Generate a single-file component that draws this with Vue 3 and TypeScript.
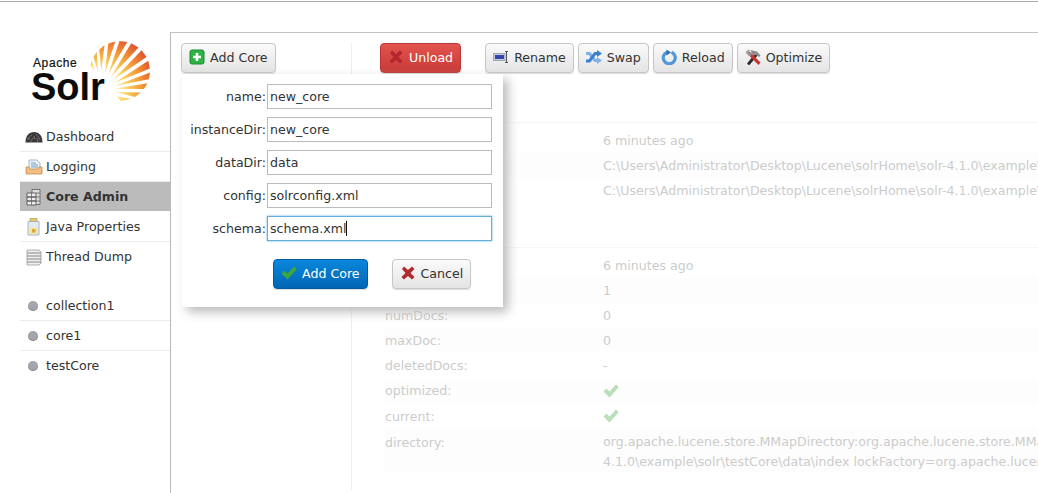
<script setup lang="ts">
const F = { x: 101, y: 90 }
const C = { x: 120, y: 71 }
const R = 30

function onArc(deg: number): string {
  const a = (deg * Math.PI) / 180
  return `${(C.x + R * Math.cos(a)).toFixed(1)},${(C.y + R * Math.sin(a)).toFixed(1)}`
}

const rayAngles: [number, number, number][] = [
  [-168, -160, 20], [-152, -141, 19], [-134, -121, 19], [-113, -99, 17],
  [-91, -76, 17], [-68, -52, 16], [-44, -28, 16], [-20, -5, 15],
  [3, 16, 14], [24, 37, 14], [46, 60, 15], [69, 88, 17],
]

const rays = rayAngles.map(([a, b, inner]) => {
  const [ax, ay] = onArc(a).split(',').map(Number)
  const [bx, by] = onArc(b).split(',').map(Number)
  const mx = (ax + bx) / 2 - F.x
  const my = (ay + by) / 2 - F.y
  const l = Math.hypot(mx, my)
  const sx = F.x + (mx / l) * inner
  const sy = F.y + (my / l) * inner
  return `${sx.toFixed(1)},${sy.toFixed(1)} ${onArc(a)} ${onArc(b)}`
})

const icons: Record<string, string> = {
  dashboard:
    '<path d="M0.500 14.500C0.500 7.500 4 4 9 4s8.500 3.500 8.500 10.500z" fill="#3a3a3d"/><path d="M3 12c1-3 2-4 4-5M6 14c0-3 2-4 4-4M11 6c1 2 3 3 4 6M2 10l3 1M9 8l1 3M12 10l1 4" stroke="#7d6f70" stroke-width=".9" fill="none"/>',
  logging:
    '<path d="M4 2h8l3 3v7H4z" fill="#eef3f8" stroke="#8fa3b8" stroke-width=".8"/><path d="M6 5h5M6 7h7M6 9h7" stroke="#6d9ec9"/><path d="M1 9h3l1 2h8l1-2h3v7H1z" fill="#f3bd83" stroke="#c68a4c" stroke-width=".8"/>',
  core:
    '<path d="M7 1.500h8v15H7z" fill="#ddd" stroke="#666" stroke-width=".9"/><path d="M2 5h9v4H2zM2 9h9v4H2zM2 13h9v4H2z" fill="#eee" stroke="#555" stroke-width=".9"/><path d="M6.500 5v12M11 5h4M11 9h4M11 13h4" stroke="#666" stroke-width=".8"/>',
  java:
    '<path d="M5 .500h7v3H5z" fill="#e7c66d" stroke="#b79b4e" stroke-width=".7"/><path d="M3 3.500h11V17H3z" fill="#e2ebf0" stroke="#9fb0ba" stroke-width=".9"/><path d="M4.500 9.500h8V16h-8z" fill="#f5e3a5"/><rect x="7" y="11" width="3.500" height="3.500" fill="#d9a63c"/>',
  thread:
    '<path d="M2 2h12l2 2v11l-2 2H2z" fill="#eee" stroke="#999" stroke-width=".8"/><path d="M2 5h14M2 8h14M2 11h14M2 14h14" stroke="#888" stroke-width="1"/>',
  add:
    '<rect x="1" y="1" width="14" height="14" rx="2" fill="#2fb344" stroke="#1c8a30"/><path d="M8 4v8M4 8h8" stroke="#fff" stroke-width="2.600"/>',
  x:
    '<path d="M2 4 4 1.500 8 5 12 1.500 14.500 4 10.500 8 14.500 12 12 14.500 8 11 4 14.500 1.500 12 5.500 8z" fill="#b5272c"/>',
  xdim:
    '<path d="M2 4 4 1.500 8 5 12 1.500 14.500 4 10.500 8 14.500 12 12 14.500 8 11 4 14.500 1.500 12 5.500 8z" fill="#b02a30"/>',
  rename:
    '<rect x=".500" y="4.500" width="11.500" height="7" fill="#c9cfe0" stroke="#9aa"/><rect x="2" y="6" width="9" height="4" fill="#3345b0"/><path d="M12 2.500h3M13.500 2.500v11M12 13.500h3" stroke="#444" stroke-width=".9" fill="none"/>',
  swap:
    '<path d="M0 4.500h3.500l5.500 7h2.500" fill="none" stroke="#7fb2ea" stroke-width="3"/><path d="M11 8l5 3.500-5 3.500z" fill="#7fb2ea"/><path d="M0 12h3.500l5.500-7.500h2.500" fill="none" stroke="#3c80d4" stroke-width="3"/><path d="M11 1l5 3.500-5 3.500z" fill="#3c80d4"/>',
  reload:
    '<path d="M6 3.200a6 6 0 1 0 4.500 0" fill="none" stroke="#4f97d9" stroke-width="3.200"/><path d="M5.500 .500v6L10 3.500z" fill="#2b6fb5"/>',
  optimize:
    '<path d="M2 14.500 11 3.500l2.500 2L4 16.500z" fill="#2b2b2b"/><path d="M5.500 1 12 2.500l3.500 4-1.500 1.500-3-2-3 .500z" fill="#8d8d8d"/><path d="M4.500 2.500l11 11-2 2.500-11-11z" fill="#c8332e"/><path d="M1 4a3 3 0 0 1 4-3L3.500 3 5 4.500 7 3a3 3 0 0 1-3 4z" fill="#9a9a9a"/>',
  check:
    '<path d="M.500 8.500 3.500 5.500l3 3L13 1.500l2.800 2.800L6.500 14.500z" fill="#3ea63e"/>',
}

const nav = [
  { label: 'Dashboard', icon: 'dashboard' },
  { label: 'Logging', icon: 'logging' },
  { label: 'Core Admin', icon: 'core', active: true },
  { label: 'Java Properties', icon: 'java' },
  { label: 'Thread Dump', icon: 'thread' },
]
const cores = ['collection1', 'core1', 'testCore']

const actions = [
  { label: 'Rename', icon: 'rename' },
  { label: 'Swap', icon: 'swap' },
  { label: 'Reload', icon: 'reload' },
  { label: 'Optimize', icon: 'optimize' },
]

const fields = [
  { label: 'name', value: 'new_core' },
  { label: 'instanceDir', value: 'new_core' },
  { label: 'dataDir', value: 'data' },
  { label: 'config', value: 'solrconfig.xml' },
  { label: 'schema', value: 'schema.xml', focus: true },
]

const instance = [
  { k: 'lastModified:', v: '6 minutes ago' },
  { k: 'instanceDir:', v: 'C:\\Users\\Administrator\\Desktop\\Lucene\\solrHome\\solr-4.1.0\\example\\solr\\testCore\\' },
  { k: 'dataDir:', v: 'C:\\Users\\Administrator\\Desktop\\Lucene\\solrHome\\solr-4.1.0\\example\\solr\\testCore\\data\\' },
]
const index = [
  { k: 'lastModified:', v: '6 minutes ago' },
  { k: 'version:', v: '1' },
  { k: 'numDocs:', v: '0' },
  { k: 'maxDoc:', v: '0' },
  { k: 'deletedDocs:', v: '-' },
]
</script>

<template>
  <div class="page">
    <aside class="side">
      <svg class="logo" viewBox="20 30 140 80" width="140" height="80" role="img" aria-label="Apache Solr">
        <defs>
          <radialGradient id="sun" gradientUnits="userSpaceOnUse" cx="101" cy="90" r="62">
            <stop offset="0.15" stop-color="#fff4c4" />
            <stop offset="0.42" stop-color="#fbd05a" />
            <stop offset="0.68" stop-color="#f29033" />
            <stop offset="1" stop-color="#d83a2e" />
          </radialGradient>
        </defs>
        <polygon v-for="(r, i) in rays" :key="i" :points="r" fill="url(#sun)" />
        <text x="33" y="67" class="logo-a">Apache</text>
        <text x="31" y="100" class="logo-s">Solr</text>
      </svg>

      <ul class="menu">
        <li v-for="n in nav" :key="n.label" class="item" :class="{ on: n.active }">
          <svg class="nav-ico" viewBox="0 0 18 18" v-html="icons[n.icon]"></svg>
          <span>{{ n.label }}</span>
        </li>
      </ul>
      <ul class="menu cores">
        <li v-for="c in cores" :key="c" class="item">
          <span class="dot"></span>
          <span>{{ c }}</span>
        </li>
      </ul>
    </aside>

    <main class="content">
      <div class="left">
        <button class="btn"><svg class="ico" viewBox="0 0 16 16" v-html="icons.add"></svg>Add Core</button>

        <form class="popup" @submit.prevent>
          <label v-for="f in fields" :key="f.label" class="field">
            <span class="flabel">{{ f.label }}:</span>
            <span class="inputwrap">
              <input class="input" :class="{ focus: f.focus }" :value="f.value" />
              <i v-if="f.focus" class="caret"></i>
            </span>
          </label>
          <div class="popup-btns">
            <button class="btn primary"><svg class="ico" viewBox="0 0 16 16" v-html="icons.check"></svg>Add Core</button>
            <button class="btn"><svg class="ico" viewBox="0 0 16 16" v-html="icons.xdim"></svg>Cancel</button>
          </div>
        </form>
      </div>

      <div class="right">
        <div class="toolbar">
          <button class="btn danger"><svg class="ico" viewBox="0 0 16 16" v-html="icons.x"></svg>Unload</button>
          <div class="actions">
            <button v-for="a in actions" :key="a.label" class="btn">
              <svg class="ico" viewBox="0 0 16 16" v-html="icons[a.icon]"></svg>{{ a.label }}
            </button>
          </div>
        </div>

        <section class="sect first">
          <div v-for="r in instance" :key="r.k + r.v" class="row">
            <span class="k">{{ r.k }}</span><span class="v">{{ r.v }}</span>
          </div>
        </section>

        <section class="sect second">
          <div v-for="r in index" :key="r.k + r.v" class="row">
            <span class="k">{{ r.k }}</span><span class="v">{{ r.v }}</span>
          </div>
          <div class="row">
            <span class="k">optimized:</span>
            <span class="v"><svg class="tick" viewBox="0 0 16 16" v-html="icons.check"></svg></span>
          </div>
          <div class="row r26">
            <span class="k">current:</span>
            <span class="v"><svg class="tick" viewBox="0 0 16 16" v-html="icons.check"></svg></span>
          </div>
          <div class="row tall">
            <span class="k dirk">directory:</span>
            <span class="v">
              <span class="line">org.apache.lucene.store.MMapDirectory:org.apache.lucene.store.MMapDirectory@C:\Users\Administrator</span>
              <span class="line">4.1.0\example\solr\testCore\data\index lockFactory=org.apache.lucene.store.NativeFSLockFactory</span>
            </span>
          </div>
        </section>
      </div>
    </main>
  </div>
</template>

<style>
html,
body {
  margin: 0;
  background: #fff;
  overflow: hidden;
}
</style>

<style scoped>
.page {
  display: flex;
  box-sizing: border-box;
  height: 492px;
  margin-top: 1px;
  border-top: 1px solid #a9a9a9;
  font-family: "DejaVu Sans", Verdana, sans-serif;
  font-size: 12.6px;
  color: #333;
  overflow: hidden;
}
.side {
  width: 150px;
  margin-left: 20px;
  flex: none;
}
.logo {
  display: block;
  margin-top: 28px;
  margin-bottom: 12px;
}
.logo-a {
  font: 400 12px "Liberation Sans", sans-serif;
  letter-spacing: 0.6px;
  fill: #111;
  stroke: #111;
  stroke-width: 0.2px;
}
.logo-s {
  font: 700 38px "Liberation Sans", sans-serif;
  fill: #0c0c0c;
}
.menu {
  list-style: none;
  margin: 0;
  padding: 0;
}
.cores {
  margin-top: 20px;
}
.item {
  display: flex;
  align-items: center;
  gap: 4px;
  height: 29px;
  padding-left: 6px;
  margin-bottom: 1px;
  box-shadow: 0 1px 0 #ececec;
  color: #333;
}
.item:last-child {
  box-shadow: none;
}
.item.on {
  background: #bbb;
  font-weight: 700;
  box-shadow: none;
}
.nav-ico {
  width: 18px;
  height: 18px;
  margin-left: -1px;
  margin-right: -1px;
  flex: none;
}
.dot {
  width: 10px;
  height: 10px;
  margin: 0 4px 0 2px;
  border-radius: 50%;
  background: #a5a5ad;
  box-shadow: inset 0 -1px 1px #8c8c90;
  flex: none;
}
.content {
  flex: 1;
  display: flex;
  min-width: 0;
  margin-top: 30px;
  padding: 10px 0 3px 10px;
  border-top: 1px solid #c4c4c4;
  border-left: 1px solid #b8b8b8;
}
.left {
  position: relative;
  width: 170px;
  flex: none;
  border-right: 1px solid #eee;
}
.right {
  flex: 1;
  min-width: 0;
  padding-left: 28px;
}
.btn {
  display: inline-flex;
  align-items: center;
  gap: 5px;
  box-sizing: border-box;
  height: 30px;
  padding: 0 7px 2px;
  border: 1px solid #c6c6c6;
  border-radius: 4px;
  background: linear-gradient(#fafafa, #e4e4e4);
  box-shadow: 0 1px 1px #ddd;
  color: #333;
  font: 12.6px "DejaVu Sans", Verdana, sans-serif;
  white-space: nowrap;
}
.ico {
  width: 16px;
  height: 16px;
  flex: none;
}
.danger {
  background: linear-gradient(#e2544f, #c93a36);
  border-color: #b73532;
  color: #fff;
}
.primary {
  background: linear-gradient(#0a87dd, #0066b4);
  border-color: #005b9f;
  color: #fff;
}
.toolbar {
  display: flex;
  gap: 24px;
}
.actions {
  display: flex;
  gap: 4px;
}
.popup {
  position: absolute;
  z-index: 2;
  left: 1px;
  top: 31px;
  box-sizing: border-box;
  width: 321px;
  height: 233px;
  padding-top: 10px;
  background: #fff;
  box-shadow: 5px 5px 10px #bbb;
}
.field {
  display: flex;
  align-items: center;
  height: 25px;
  margin-bottom: 8px;
}
.flabel {
  width: 84px;
  text-align: right;
  flex: none;
}
.inputwrap {
  position: relative;
  margin-left: 1px;
}
.input {
  display: block;
  box-sizing: border-box;
  width: 225px;
  height: 25px;
  padding: 0 2px;
  border: 1px solid #bbb;
  outline: none;
  font: 12.6px "DejaVu Sans", Verdana, sans-serif;
  color: #333;
  background: #fff;
}
.input.focus {
  border-color: #62afdd;
  box-shadow: 0 0 2px #62afdd;
}
.caret {
  position: absolute;
  left: 79px;
  top: 5px;
  width: 1px;
  height: 15px;
  background: #111;
}
.popup-btns {
  display: flex;
  gap: 24px;
  margin-top: 18px;
  padding-left: 91px;
}
.sect {
  font-size: 12.6px;
  color: #ccc;
  margin-left: 5px;
}
.sect.first {
  height: 119px;
  margin-top: 49px;
  padding-top: 5px;
  border-top: 1px solid #f6f6f6;
}
.sect.second {
  padding-top: 5px;
  border-top: 1px solid #f6f6f6;
}
.row {
  display: flex;
  height: 25px;
  align-items: center;
  white-space: nowrap;
}
.row:nth-child(even) {
  background: #fdfdfd;
}
.row.r26 {
  height: 26px;
}
.row.tall {
  height: 44px;
  align-items: flex-start;
  padding-top: 3px;
  box-sizing: border-box;
}
.k {
  width: 218px;
  flex: none;
}
.dirk {
  margin-top: 3px;
}
.v {
  flex: 1;
  min-width: 0;
  overflow: hidden;
}
.line {
  display: block;
  line-height: 20px;
}
.tick {
  display: block;
  width: 16px;
  height: 16px;
  opacity: 0.35;
}
</style>
